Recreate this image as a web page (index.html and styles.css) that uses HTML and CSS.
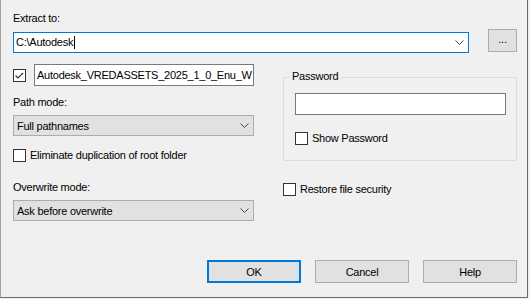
FILE: index.html
```html
<!DOCTYPE html>
<html lang="en">

<head>
  <meta charset="UTF-8">
  <title>Extraction path and options</title>
  <link rel="stylesheet" href="styles.css">
</head>

<body>
  <div class="dialog">
    <div class="label">Extract to:</div>
    <div class="extract-row">
      <div class="combo combo-edit">
        <span class="value">C:\Autodesk<span class="caret"></span></span>
        <svg class="chevron" width="9" height="5" viewBox="0 0 9 5"><polyline points="0.5,0.5 4.5,4.5 8.5,0.5" /></svg>
      </div>
      <div class="btn btn-browse">...</div>
    </div>

    <div class="columns">
      <div class="col-left">
        <div class="name-row">
          <span class="checkbox">
            <svg width="11" height="11" viewBox="0 0 11 11"><polyline points="1.5,5.5 4,8 9,3" /></svg>
          </span>
          <div class="textbox name">Autodesk_VREDASSETS_2025_1_0_Enu_W</div>
        </div>

        <div class="label gap-label">Path mode:</div>
        <div class="combo">
          <span class="value">Full pathnames</span>
          <svg class="chevron" width="9" height="5" viewBox="0 0 9 5"><polyline points="0.5,0.5 4.5,4.5 8.5,0.5" /></svg>
        </div>

        <div class="check eliminate"><span class="checkbox"></span>Eliminate duplication of root folder</div>

        <div class="label overwrite-label">Overwrite mode:</div>
        <div class="combo">
          <span class="value">Ask before overwrite</span>
          <svg class="chevron" width="9" height="5" viewBox="0 0 9 5"><polyline points="0.5,0.5 4.5,4.5 8.5,0.5" /></svg>
        </div>
      </div>

      <div class="col-right">
        <div class="group">
          <span class="group-title">Password</span>
          <div class="textbox password"></div>
          <div class="check show-pw"><span class="checkbox"></span>Show Password</div>
        </div>
        <div class="check restore"><span class="checkbox"></span>Restore file security</div>
      </div>
    </div>

    <div class="buttons">
      <div class="btn btn-default">OK</div>
      <div class="btn">Cancel</div>
      <div class="btn">Help</div>
    </div>
  </div>
</body>

</html>
```

FILE: styles.css
```css
:root {
  --face: #f0f0f0;
  --control: #e1e1e1;
  --control-border: #adadad;
  --field-border: #7a7a7a;
  --accent: #0078d7;
  --text: #000;
  --glyph: #333;
}

body {
  margin: 0;
  background: var(--face);
  font-family: "Liberation Sans", Arial, sans-serif;
  font-size: 11px;
  letter-spacing: -0.25px;
  color: var(--text);
}

.dialog {
  width: 528px;
  height: 298px;
  box-sizing: border-box;
  border-left: 1px solid #a0a0a0;
  border-right: 1px solid #6a6a6a;
  border-bottom: 1px solid #6a6a6a;
  padding: 12px 10px 0 12px;
  display: flex;
  flex-direction: column;
}

.label {
  height: 13px;
  line-height: 13px;
}

.extract-row {
  display: flex;
  align-items: flex-start;
  gap: 19px;
  margin-top: 4px;
}

.combo {
  height: 21px;
  box-sizing: border-box;
  border: 1px solid var(--control-border);
  background: var(--control);
  display: flex;
  align-items: center;
  justify-content: space-between;
  padding: 0 4px 0 3px;
  margin-top: 6px;
  white-space: nowrap;
}

.combo-edit {
  flex: 1;
  margin-top: 3px;
  background: white;
  border-color: var(--accent);
  padding-left: 2px;
}

.caret {
  display: inline-block;
  width: 1px;
  height: 13px;
  background: #000;
  vertical-align: -3px;
  margin-left: 1px;
}

.chevron polyline {
  fill: none;
  stroke: #444;
  stroke-width: 1;
}

.btn {
  width: 94px;
  height: 23px;
  box-sizing: border-box;
  border: 1px solid var(--control-border);
  background: var(--control);
  display: flex;
  align-items: center;
  justify-content: center;
}

.btn-browse {
  width: 29px;
  padding-bottom: 3px;
}

.btn-default {
  border: 2px solid var(--accent);
}

.columns {
  display: flex;
  gap: 29px;
  margin-top: 11px;
}

.col-left {
  width: 241px;
  display: flex;
  flex-direction: column;
}

.col-right {
  width: 234px;
  display: flex;
  flex-direction: column;
}

.name-row {
  display: flex;
  align-items: center;
  gap: 8px;
}

.checkbox {
  width: 13px;
  height: 13px;
  box-sizing: border-box;
  border: 1px solid var(--glyph);
  background: white;
  flex: none;
  display: flex;
}

.checkbox polyline {
  fill: none;
  stroke: var(--glyph);
  stroke-width: 1.2;
}

.textbox {
  height: 22px;
  box-sizing: border-box;
  border: 1px solid var(--field-border);
  background: white;
}

.name {
  flex: 1;
  min-width: 0;
  padding-left: 2px;
  line-height: 20px;
  overflow: hidden;
  white-space: nowrap;
}

.gap-label {
  margin-top: 10px;
}

.check {
  display: flex;
  align-items: center;
  gap: 4px;
  height: 13px;
  line-height: 13px;
  white-space: nowrap;
}

.eliminate {
  margin-top: 13px;
}

.overwrite-label {
  margin-top: 19px;
}

.group {
  position: relative;
  margin-top: 13px;
  border: 1px solid #dcdcdc;
  padding: 15px 10px 15px 11px;
}

.group-title {
  position: absolute;
  top: -8px;
  left: 5px;
  padding: 0 3px;
  line-height: 13px;
  background: var(--face);
}

.show-pw {
  margin-top: 17px;
}

.restore {
  margin-top: 22px;
}

.buttons {
  display: flex;
  justify-content: flex-end;
  gap: 14px;
  margin-top: 39px;
}
```
